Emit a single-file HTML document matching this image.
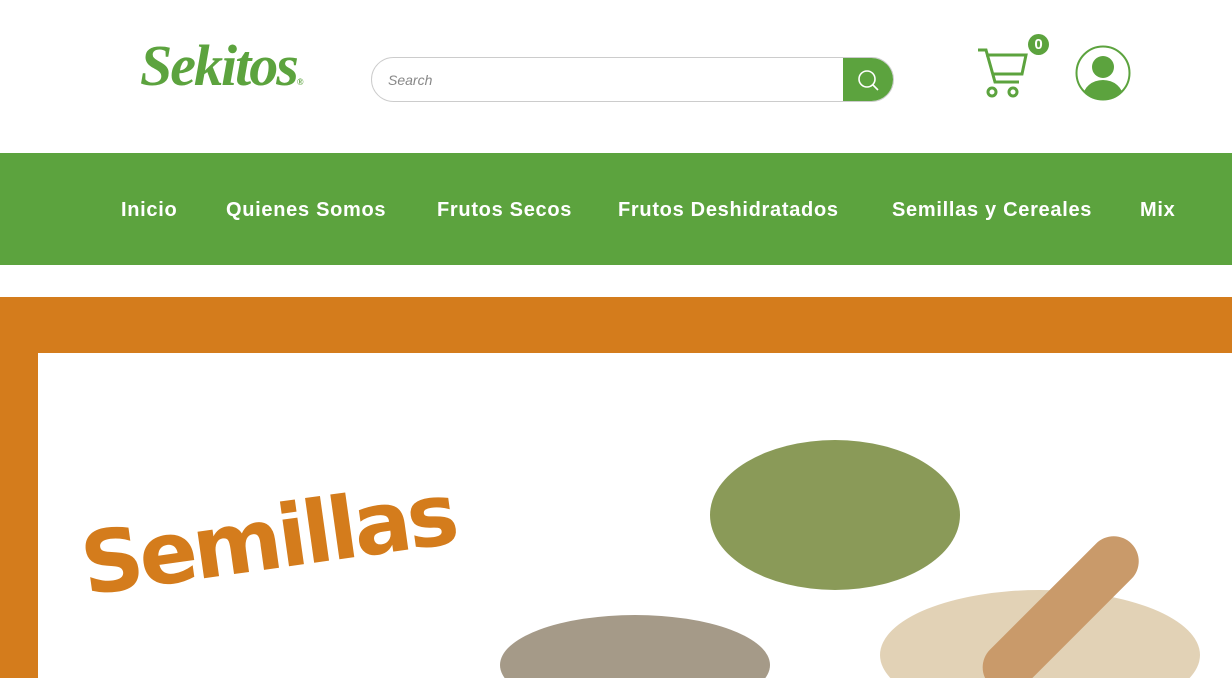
<!DOCTYPE html>
<html><head><meta charset="utf-8"><style>
*{margin:0;padding:0;box-sizing:border-box}
html,body{width:1232px;height:678px;overflow:hidden}
body{background:#fff;font-family:"Liberation Sans",sans-serif}
#w{position:relative;width:1232px;height:678px;overflow:hidden}
.abs{position:absolute}
.logo{left:140px;top:32px;font-family:"Liberation Serif",serif;font-style:italic;font-weight:bold;font-size:58px;color:#5ca33e;letter-spacing:-2px}
.search{left:371px;top:57px;width:523px;height:45px;border:1px solid #ccc;border-radius:23px;overflow:hidden}
.search span{position:absolute;left:16px;top:14px;font-style:italic;font-size:14px;color:#888}
.sbtn{position:absolute;right:0;top:0;width:50px;height:45px;background:#5ca33e}
.nav{left:0;top:153px;width:1232px;height:112px;background:#5ca33e}
.nav a{position:absolute;top:46px;color:#fff;font-weight:bold;font-size:20px;text-decoration:none;letter-spacing:0.7px}
.orange{left:0;top:297px;width:1232px;height:381px;background:#d47c1c}
.inner{left:38px;top:353px;width:1194px;height:325px;background:#fff}
.sem{left:80px;top:490px;font-family:"DejaVu Sans",sans-serif;font-weight:bold;font-size:86px;color:#d47c1c;transform:rotate(-8deg);letter-spacing:-4px}
</style></head><body><div id="w">
<div class="abs logo">Sekitos<span style="font-size:9px">®</span></div>
<div class="abs search"><span>Search</span><div class="sbtn"><svg width="50" height="45"><circle cx="24" cy="21" r="8" fill="none" stroke="#fff" stroke-width="1.6"/><line x1="30" y1="27" x2="35" y2="32" stroke="#fff" stroke-width="1.6"/></svg></div></div>
<svg class="abs" style="left:975px;top:45px" width="60" height="55"><path d="M3 5h8l9 32h24" fill="none" stroke="#5ca33e" stroke-width="3"/><path d="M11 10h40l-4 19H17" fill="none" stroke="#5ca33e" stroke-width="3"/><circle cx="17" cy="47" r="4" fill="none" stroke="#5ca33e" stroke-width="3"/><circle cx="38" cy="47" r="4" fill="none" stroke="#5ca33e" stroke-width="3"/></svg>
<div class="abs" style="left:1028px;top:34px;width:21px;height:21px;border-radius:50%;background:#5ca33e;color:#fff;font-size:15px;font-weight:bold;text-align:center;line-height:21px">0</div>
<svg class="abs" style="left:1075px;top:45px" width="57" height="57"><defs><clipPath id="c"><circle cx="28" cy="28" r="26"/></clipPath></defs><circle cx="28" cy="28" r="26.5" fill="none" stroke="#5ca33e" stroke-width="2"/><g clip-path="url(#c)" fill="#5ca33e"><circle cx="28" cy="22" r="11"/><ellipse cx="28" cy="52" rx="20" ry="17"/></g></svg>
<div class="abs nav"><a style="left:121px">Inicio</a><a style="left:226px">Quienes Somos</a><a style="left:437px">Frutos Secos</a><a style="left:618px">Frutos Deshidratados</a><a style="left:892px">Semillas y Cereales</a><a style="left:1140px">Mix</a></div>
<div class="abs orange"></div>
<div class="abs inner"></div>
<div class="abs sem">Semillas</div>
<div class="abs" style="left:710px;top:440px;width:250px;height:150px;border-radius:50%;background:#8a9a58"></div>
<div class="abs" style="left:500px;top:615px;width:270px;height:100px;border-radius:50%;background:#a59a88"></div>
<div class="abs" style="left:880px;top:590px;width:320px;height:130px;border-radius:50%;background:#e2d2b6"></div>
<div class="abs" style="width:200px;height:50px;border-radius:25px;background:#c99a6a;transform:rotate(-45deg);transform-origin:left center;left:990px;top:660px"></div>
</div></body></html>
